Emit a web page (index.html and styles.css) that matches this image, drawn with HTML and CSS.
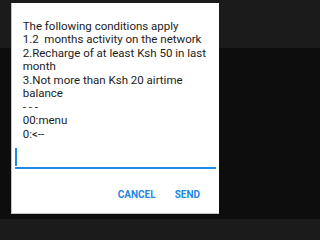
FILE: index.html
```html
<!DOCTYPE html>
<html>
<head>
<meta charset="utf-8">
<link rel="stylesheet" href="styles.css">
</head>
<body>
<div class="dialog">
  <div class="message">The following conditions apply
1.2  months activity on the network
2.Recharge of at least Ksh 50 in last month
3.Not more than Ksh 20 airtime balance
- - -
00:menu
0:&lt;--</div>
  <div class="input"><span class="cursor"></span></div>
  <div class="actions">
    <span class="btn">CANCEL</span>
    <span class="btn">SEND</span>
  </div>
</div>
</body>
</html>
```
FILE: styles.css
```css
html, body {
  margin: 0;
  padding: 0;
}
body {
  width: 231px;
  height: 219px;
  overflow: hidden;
  background: linear-gradient(#1b1b1b 0, #1b1b1b 48px, #0d0d0d 48px);
  font-family: Roboto, "Liberation Sans", sans-serif;
}
.dialog {
  margin: 3px 0 0 11px;
  width: 208px;
  height: 211px;
  box-sizing: border-box;
  background: #fff;
  border-left: 1px solid #c4c4c4;
  border-bottom: 1px solid #c4c4c4;
  padding-top: 16.5px;
  display: flex;
  flex-direction: column;
}
.message {
  white-space: pre-wrap;
  font-size: 11.5px;
  line-height: 13.55px;
  color: #1c1c1c;
  padding: 0 5px 0 10.7px;
}
.input {
  margin: 5.5px 0 0 3px;
  width: 201px;
  height: 20px;
  border-bottom: 2px solid #1e88e5;
  display: flex;
  align-items: flex-end;
}
.cursor {
  width: 1.5px;
  height: 18px;
  background: #1e88e5;
  margin-bottom: 1px;
}
.actions {
  display: flex;
  justify-content: flex-end;
  gap: 19px;
  padding: 0 19px 0 0;
  margin-top: 19.7px;
}
.btn {
  font-size: 10px;
  line-height: 12px;
  font-weight: 700;
  color: #1e88e5;
}
```
